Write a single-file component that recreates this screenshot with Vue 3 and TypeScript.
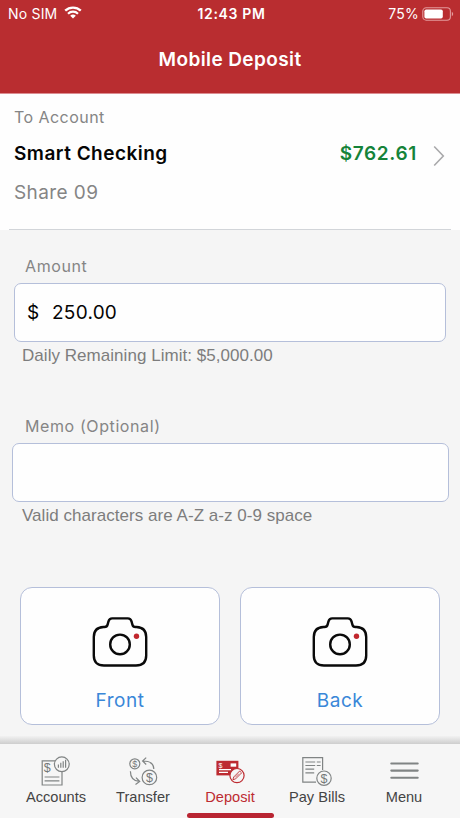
<script setup lang="ts">
import { ref } from 'vue'

type TabId = 'accounts' | 'transfer' | 'deposit' | 'bills' | 'menu'

interface Tab {
  id: TabId
  label: string
}

const tabs: Tab[] = [
  { id: 'accounts', label: 'Accounts' },
  { id: 'transfer', label: 'Transfer' },
  { id: 'deposit', label: 'Deposit' },
  { id: 'bills', label: 'Pay Bills' },
  { id: 'menu', label: 'Menu' },
]
const sides: string[] = ['Front', 'Back']

const activeTab = ref<TabId>('deposit')
const amount = ref('250.00')
const memo = ref('')
</script>

<template>
  <div class="screen">
    <header class="header">
      <div class="status">
        <div class="carrier">
          <span class="sim">No SIM</span>
          <svg class="wifi" width="18" height="13" viewBox="0 0 18 13">
            <path d="M1.2 4.7a11.2 11.2 0 0 1 15.6 0" fill="none" stroke="#fff" stroke-width="2.3" />
            <path d="M4 7.7a7.2 7.2 0 0 1 10 0" fill="none" stroke="#fff" stroke-width="2.2" />
            <path d="M9 12.6 6.2 9.8a4 4 0 0 1 5.6 0z" fill="#fff" />
          </svg>
        </div>
        <span class="time">12:43 PM</span>
        <div class="power">
          <span class="percent">75%</span>
          <svg width="32" height="14" viewBox="0 0 32 14">
            <rect x="0.8" y="0.8" width="27.6" height="12.4" rx="3.4" fill="none" stroke="#e39a9c" stroke-width="1.1" />
            <rect x="2.4" y="2.4" width="18.4" height="9.2" rx="1.8" fill="#fff" />
            <path d="M29.8 4.8q1.4.7 1.4 2.2t-1.4 2.2z" fill="#e39a9c" />
          </svg>
        </div>
      </div>
      <h1 class="title">Mobile Deposit</h1>
    </header>

    <section class="account">
      <div class="to">To Account</div>
      <div class="account-row">
        <span class="name">Smart Checking</span>
        <span class="balance">$762.61</span>
        <svg class="chevron" width="12" height="22" viewBox="0 0 12 22">
          <path d="M1.2 1.5 10.3 11 1.2 20.5" fill="none" stroke="#a9a9ab" stroke-width="1.6" />
        </svg>
      </div>
      <div class="share">Share 09</div>
      <div class="divider"></div>
    </section>

    <main class="form">
      <label class="label" for="amount">Amount</label>
      <div class="field">
        <span class="currency">$</span>
        <input id="amount" v-model="amount" class="input" type="text" />
      </div>
      <div class="hint">Daily Remaining Limit: $5,000.00</div>

      <label class="label memo-label" for="memo">Memo (Optional)</label>
      <div class="field memo">
        <input id="memo" v-model="memo" class="input" type="text" />
      </div>
      <div class="hint">Valid characters are A-Z a-z 0-9 space</div>

      <div class="captures">
        <button v-for="side in sides" :key="side" class="capture" type="button">
          <svg width="56" height="50" viewBox="0 0 56 50">
            <path
              d="M11.5 10H12.5Q15 10 15.6 7.6L16.4 4.6Q17.3 1.4 20.2 1.4H35.8Q38.7 1.4 39.6 4.6L40.4 7.6Q41 10 43.5 10H44.5Q54.2 10.5 54.2 20V38.5Q54.2 48.5 44 48.5H12Q1.8 48.5 1.8 38.5V20Q1.8 10.5 11.5 10Z"
              fill="none" stroke="#0a0a0a" stroke-width="2.4" stroke-linejoin="round"
            />
            <circle cx="28" cy="27.4" r="9.8" fill="none" stroke="#0a0a0a" stroke-width="2.4" />
            <circle cx="44.5" cy="19.2" r="2.7" fill="#c1272d" />
          </svg>
          <span class="side">{{ side }}</span>
        </button>
      </div>
    </main>

    <div class="shade"></div>
    <nav class="tabs">
      <button
        v-for="tab in tabs"
        :key="tab.id"
        class="tab"
        :class="{ active: tab.id === activeTab }"
        type="button"
        @click="activeTab = tab.id"
      >
        <svg v-if="tab.id === 'accounts'" class="icon" width="30" height="32" viewBox="0 0 30 32">
          <path d="M14 5.8H1.2V30H21V17" />
          <path d="M3.6 22h14.8M3.6 25.8h14.8" />
          <text x="2.8" y="16.9" font-size="12.5">$</text>
          <circle cx="20.8" cy="9.3" r="7.4" />
          <path d="M17.4 12.8V9.5M19.8 12.8V7.8M22.2 12.8V6.2M24.6 12.8V4.8" />
        </svg>
        <svg v-else-if="tab.id === 'transfer'" class="icon" width="30" height="32" viewBox="0 0 30 32">
          <circle cx="6.8" cy="8.8" r="5" />
          <text x="4.3" y="12.1" font-size="9">$</text>
          <circle cx="21.4" cy="22.4" r="7.3" />
          <text x="17.9" y="26.9" font-size="12.5">$</text>
          <path d="M25.8 14Q25.8 6 14.8 6M18.2 2.6 14.6 6l3.6 3.5" />
          <path d="M2.4 16.2Q2.4 25.6 11.2 26.4M8 22.6l3.7 3.9-4.2 2.9" />
        </svg>
        <svg v-else-if="tab.id === 'deposit'" class="icon" width="30" height="32" viewBox="0 0 30 32">
          <rect x="1.4" y="5.8" width="22" height="14.6" fill="#bd2b31" stroke="none" />
          <rect x="15.6" y="8.4" width="5.6" height="3.3" fill="#fff" stroke="none" />
          <path d="M4 14.6h12M4 17.4h9" stroke="#fff" stroke-width="1.1" />
          <text x="3.6" y="12.6" font-size="7" class="check-sign">$</text>
          <circle cx="22" cy="20.6" r="7.1" fill="#f6f6f6" stroke="#bd2b31" stroke-width="1.2" />
          <path d="m17.9 24.7.8-2.7 6-6 1.9 1.9-6 6z" stroke="#bd2b31" stroke-width="0.9" />
          <path d="m20.2 22.4 3.7-3.7" stroke="#bd2b31" stroke-width="0.7" />
        </svg>
        <svg v-else-if="tab.id === 'bills'" class="icon" width="30" height="32" viewBox="0 0 30 32">
          <path d="M14 27.2H.8V2.6H20.6V15" />
          <path d="M3.4 7h9.8M14.8 7h3.8M3.4 10.5h9.8M14.8 10.5h3.8M3.4 14.2h8.8M3.4 17.9h8.8" />
          <circle cx="22" cy="23.2" r="7.2" fill="#f6f6f6" />
          <text x="18.5" y="27.7" font-size="12.5">$</text>
        </svg>
        <svg v-else class="icon" width="30" height="32" viewBox="0 0 30 32">
          <path d="M2.3 8.5h26.4M2.3 15.6h26.4M2.3 22.7h26.4" stroke-width="2.1" stroke-linecap="round" />
        </svg>
        <span class="tab-label">{{ tab.label }}</span>
        <span class="indicator"></span>
      </button>
    </nav>
  </div>
</template>

<style>
body {
  margin: 0;
}
</style>

<style scoped>
.screen {
  width: 460px;
  height: 818px;
  display: flex;
  flex-direction: column;
  overflow: hidden;
  background: #f5f5f5;
  font-family: Inter, 'Liberation Sans', sans-serif;
}

button {
  margin: 0;
  border: 0;
  background: none;
  font: inherit;
}

.header {
  height: 93px;
  flex: none;
  background: #b92d30;
  border-bottom: 1px solid #dc8d91;
  box-sizing: content-box;
  color: #fff;
}

.status {
  display: grid;
  grid-template-columns: 1fr auto 1fr;
  align-items: center;
  height: 27px;
  padding: 0 8px;
}

.carrier,
.power {
  display: flex;
  align-items: center;
}

.carrier {
  gap: 7px;
}

.power {
  justify-content: flex-end;
  gap: 3px;
  margin-right: -2px;
}

.sim {
  font-size: 14px;
  letter-spacing: 0.2px;
}

.wifi {
  margin-top: -2px;
}

.time {
  padding-left: 3px;
  font-size: 14px;
  font-weight: 600;
  letter-spacing: 0.65px;
}

.percent {
  font-size: 14px;
  letter-spacing: 0.2px;
}

.title {
  margin: 20px 0 0;
  text-align: center;
  font-size: 19px;
  line-height: 26px;
  font-weight: 600;
  letter-spacing: 0.4px;
}

.account {
  height: 136px;
  flex: none;
  background: #fefefe;
  display: flex;
  flex-direction: column;
}

.to {
  margin: 13px 0 0 14px;
  font-size: 16px;
  line-height: 20px;
  letter-spacing: 0.45px;
  color: #858585;
}

.account-row {
  display: flex;
  align-items: center;
  height: 30px;
  margin-top: 11px;
  padding: 0 15px 0 14px;
}

.name {
  flex: 1;
  font-size: 19px;
  font-weight: 600;
  letter-spacing: 0.48px;
  color: #050505;
}

.balance {
  font-size: 19px;
  font-weight: 600;
  letter-spacing: 0.65px;
  color: #158339;
}

.chevron {
  margin: 5px 0 0 16px;
}

.share {
  margin: 13px 0 0 14px;
  font-size: 19px;
  line-height: 24px;
  letter-spacing: 0.4px;
  color: #858585;
}

.divider {
  height: 1px;
  margin: auto 9px 0;
  background: #d2d5d9;
}

.form {
  flex: 1;
  display: flex;
  flex-direction: column;
}

.label {
  margin: 26px 0 0 25px;
  font-size: 16px;
  line-height: 20px;
  letter-spacing: 0.6px;
  color: #858585;
}

.field {
  display: flex;
  align-items: center;
  box-sizing: border-box;
  height: 59px;
  margin: 7px 14px 0;
  padding: 0 12px;
  background: #fefefe;
  border: 1.5px solid #b5bfda;
  border-radius: 7px;
}

.field.memo {
  margin: 7px 11px 0 12px;
}

.currency {
  width: 25px;
  font-size: 19px;
}

.input {
  flex: 1;
  min-width: 0;
  padding: 0;
  border: 0;
  outline: 0;
  background: transparent;
  font: 19px Inter, sans-serif;
  letter-spacing: 0.25px;
  color: #050505;
}

.hint {
  margin: 3px 0 0 22px;
  font-family: 'Liberation Sans', sans-serif;
  font-size: 17px;
  line-height: 21px;
  letter-spacing: 0.04px;
  color: #7d7d7d;
}

.memo-label {
  margin-top: 50px;
}

.captures {
  display: flex;
  gap: 20px;
  padding: 0 20px;
  margin-top: 61px;
}

.capture {
  flex: 1;
  height: 138px;
  box-sizing: border-box;
  display: flex;
  flex-direction: column;
  align-items: center;
  padding: 29px 0 0;
  background: #fefefe;
  border: 1px solid #b5bfda;
  border-radius: 12px;
}

.side {
  margin-top: 22px;
  font-size: 19px;
  line-height: 24px;
  letter-spacing: 0.5px;
  color: #3a87d8;
}

.shade {
  height: 8px;
  flex: none;
  background: linear-gradient(#f2f2f2, #cecece);
}

.tabs {
  display: grid;
  grid-template-columns: repeat(5, 87px);
  justify-content: center;
  height: 74px;
  flex: none;
  background: #f6f6f6;
}

.tab {
  display: flex;
  flex-direction: column;
  align-items: center;
  padding: 11px 0 0;
  color: #444;
}

.icon {
  fill: none;
  stroke: #808484;
  stroke-width: 1.2;
}

.icon text {
  font-family: 'Liberation Sans', sans-serif;
  fill: #747878;
  stroke: none;
}

.icon .check-sign {
  fill: #fff;
}

.tab-label {
  margin-top: 1px;
  font-family: 'Liberation Sans', sans-serif;
  font-size: 14.6px;
  line-height: 18px;
}

.indicator {
  width: 87px;
  height: 5px;
  margin-top: auto;
  border-radius: 3px;
}

.active {
  color: #bd2b31;
}

.active .indicator {
  background: #b92532;
}
</style>
